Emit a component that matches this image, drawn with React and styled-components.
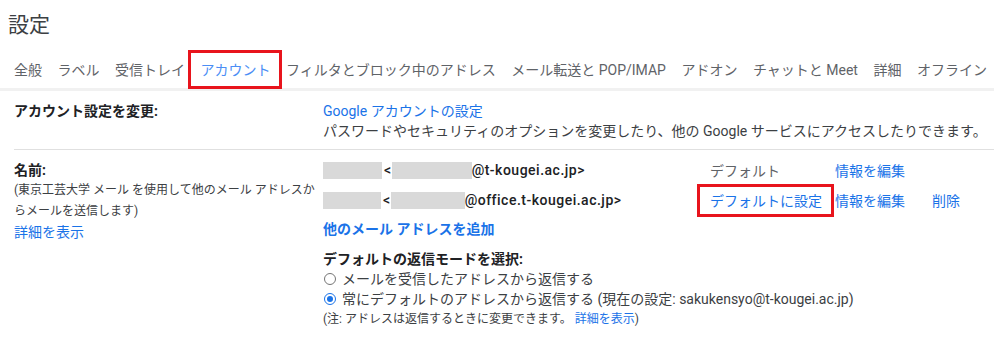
import React from "react";
import styled, { createGlobalStyle, css } from "styled-components";

const Global = createGlobalStyle`
  html, body { margin: 0; padding: 0; background: #fff; }
  body {
    font-family: Roboto, "Noto Sans CJK JP", sans-serif;
    color: #202124;
    -webkit-font-smoothing: antialiased;
  }
`;

const RED = "#e8141c";
const BLUE = "#1a73e8";

const Page = styled.div`
  width: 994px;
  height: 340px;
  overflow: hidden;
  background: #fff;
`;

const Title = styled.h1`
  margin: 0;
  padding: 9px 0 0 8px;
  height: 43px;
  box-sizing: border-box;
  font-size: 21px;
  font-weight: 400;
  color: #3c4043;
  line-height: 32px;
`;

const Tabs = styled.nav`
  display: flex;
  align-items: center;
  gap: 15.5px;
  padding: 9px 0 0 14px;
  height: 48px;
  box-sizing: border-box;
  border-bottom: 3px solid #f1f1f1;
`;

const Tab = styled.span`
  font-size: 14px;
  line-height: 20px;
  color: ${(p) => (p.$active ? "#4b8ef5" : "#5f6368")};
  white-space: nowrap;
  position: relative;
  ${(p) =>
    p.$active &&
    css`
      &::after {
        content: "";
        position: absolute;
        left: -13px;
        right: -11px;
        top: -10px;
        bottom: -9px;
        border: 3px solid ${RED};
      }
    `}
`;

const Section = styled.section`
  display: grid;
  grid-template-columns: 309px 1fr;
  margin-left: 14px;
  padding: ${(p) => p.$pad};
  border-bottom: ${(p) => (p.$divider ? "1px solid #e0e0e0" : "none")};
`;

const Label = styled.div`
  font-size: 14px;
  font-weight: 700;
  line-height: 20px;
  color: #202124;
  margin-top: ${(p) => p.$mt || "0"};
`;

const SubText = styled.div`
  font-size: 12px;
  line-height: 21px;
  color: #3c4043;
`;

const Link = styled.a`
  color: ${BLUE};
  text-decoration: none;
  font-size: ${(p) => p.$size || "14px"};
  font-weight: ${(p) => (p.$bold ? 700 : 400)};
  cursor: pointer;
  display: ${(p) => (p.$block ? "block" : "inline")};
  line-height: ${(p) => p.$lh || "inherit"};
  margin-top: ${(p) => p.$mt || "0"};
`;

const Body = styled.div`
  font-size: 14px;
  line-height: 20px;
  color: #3c4043;
  white-space: nowrap;
`;

const AddrGrid = styled.div`
  display: grid;
  grid-template-columns: 374px 138px 97px auto;
  grid-auto-rows: 30px;
  align-items: center;
  font-size: 14px;
`;

const Addr = styled.div`
  display: flex;
  align-items: center;
  font-weight: 500;
  font-size: 14px;
  letter-spacing: 0.5px;
  color: #202124;
`;

const Blur = styled.span`
  display: inline-block;
  width: ${(p) => p.$w}px;
  height: 17px;
  background: #d9d9d9;
`;

const Lt = styled.span`
  margin: 0 0 0 2px;
`;

const Status = styled.div`
  font-size: 14px;
  color: #5f6368;
  padding-left: 13px;
  position: relative;
  ${(p) =>
    p.$boxed &&
    css`
      &::after {
        content: "";
        position: absolute;
        left: 0;
        right: 1px;
        top: -6px;
        bottom: -7px;
        border: 3px solid ${RED};
      }
    `}
`;

const ReplyBlock = styled.div`
  margin-top: 10px;
`;

const RadioRow = styled.label`
  display: flex;
  align-items: center;
  gap: 6px;
  font-size: 14px;
  line-height: 20px;
  color: #3c4043;
`;

const Radio = styled.span`
  width: 12px;
  height: 12px;
  border-radius: 50%;
  box-sizing: border-box;
  border: 1px solid ${(p) => (p.$checked ? BLUE : "#757575")};
  display: inline-flex;
  align-items: center;
  justify-content: center;
  margin-left: 1px;
  &::after {
    content: "";
    width: 6px;
    height: 6px;
    border-radius: 50%;
    background: ${(p) => (p.$checked ? BLUE : "transparent")};
  }
`;

const Note = styled.div`
  font-size: 12px;
  line-height: 20px;
  color: #3c4043;
`;

export default function App() {
  const tabs = [
    "全般",
    "ラベル",
    "受信トレイ",
    "アカウント",
    "フィルタとブロック中のアドレス",
    "メール転送と POP/IMAP",
    "アドオン",
    "チャットと Meet",
    "詳細",
    "オフライン",
  ];
  return (
    <Page>
      <Global />
      <Title>設定</Title>
      <Tabs>
        {tabs.map((t) => (
          <Tab key={t} $active={t === "アカウント"}>
            {t}
          </Tab>
        ))}
      </Tabs>
      <Section $pad="10px 0 8px 0" $divider>
        <Label>アカウント設定を変更:</Label>
        <div>
          <Link $block $lh="20px">Google アカウントの設定</Link>
          <Body>
            パスワードやセキュリティのオプションを変更したり、他の Google サービスにアクセスしたりできます。
          </Body>
        </div>
      </Section>
      <Section $pad="5px 0 0 0">
        <div>
          <Label $mt="5px">名前:</Label>
          <SubText>
            (東京工芸大学 メール を使用して他のメール アドレスからメールを送信します)
          </SubText>
          <Link $block $lh="20px">詳細を表示</Link>
        </div>
        <div>
          <AddrGrid>
            <Addr>
              <Blur $w={59} />
              <Lt>&lt;</Lt>
              <Blur $w={80} />
              @t-kougei.ac.jp&gt;
            </Addr>
            <Status>デフォルト</Status>
            <Link>情報を編集</Link>
            <span />
            <Addr>
              <Blur $w={58} />
              <Lt>&lt;</Lt>
              <Blur $w={74} />
              @office.t-kougei.ac.jp&gt;
            </Addr>
            <Status $boxed>
              <Link>デフォルトに設定</Link>
            </Status>
            <Link>情報を編集</Link>
            <Link>削除</Link>
          </AddrGrid>
          <Link $block $bold $lh="20px" $mt="4px">他のメール アドレスを追加</Link>
          <ReplyBlock>
            <Label>デフォルトの返信モードを選択:</Label>
            <RadioRow>
              <Radio />
              メールを受信したアドレスから返信する
            </RadioRow>
            <RadioRow>
              <Radio $checked />
              常にデフォルトのアドレスから返信する (現在の設定: sakukensyo@t-kougei.ac.jp)
            </RadioRow>
            <Note>
              (注: アドレスは返信するときに変更できます。 <Link $size="12px">詳細を表示</Link>)
            </Note>
          </ReplyBlock>
        </div>
      </Section>
    </Page>
  );
}
